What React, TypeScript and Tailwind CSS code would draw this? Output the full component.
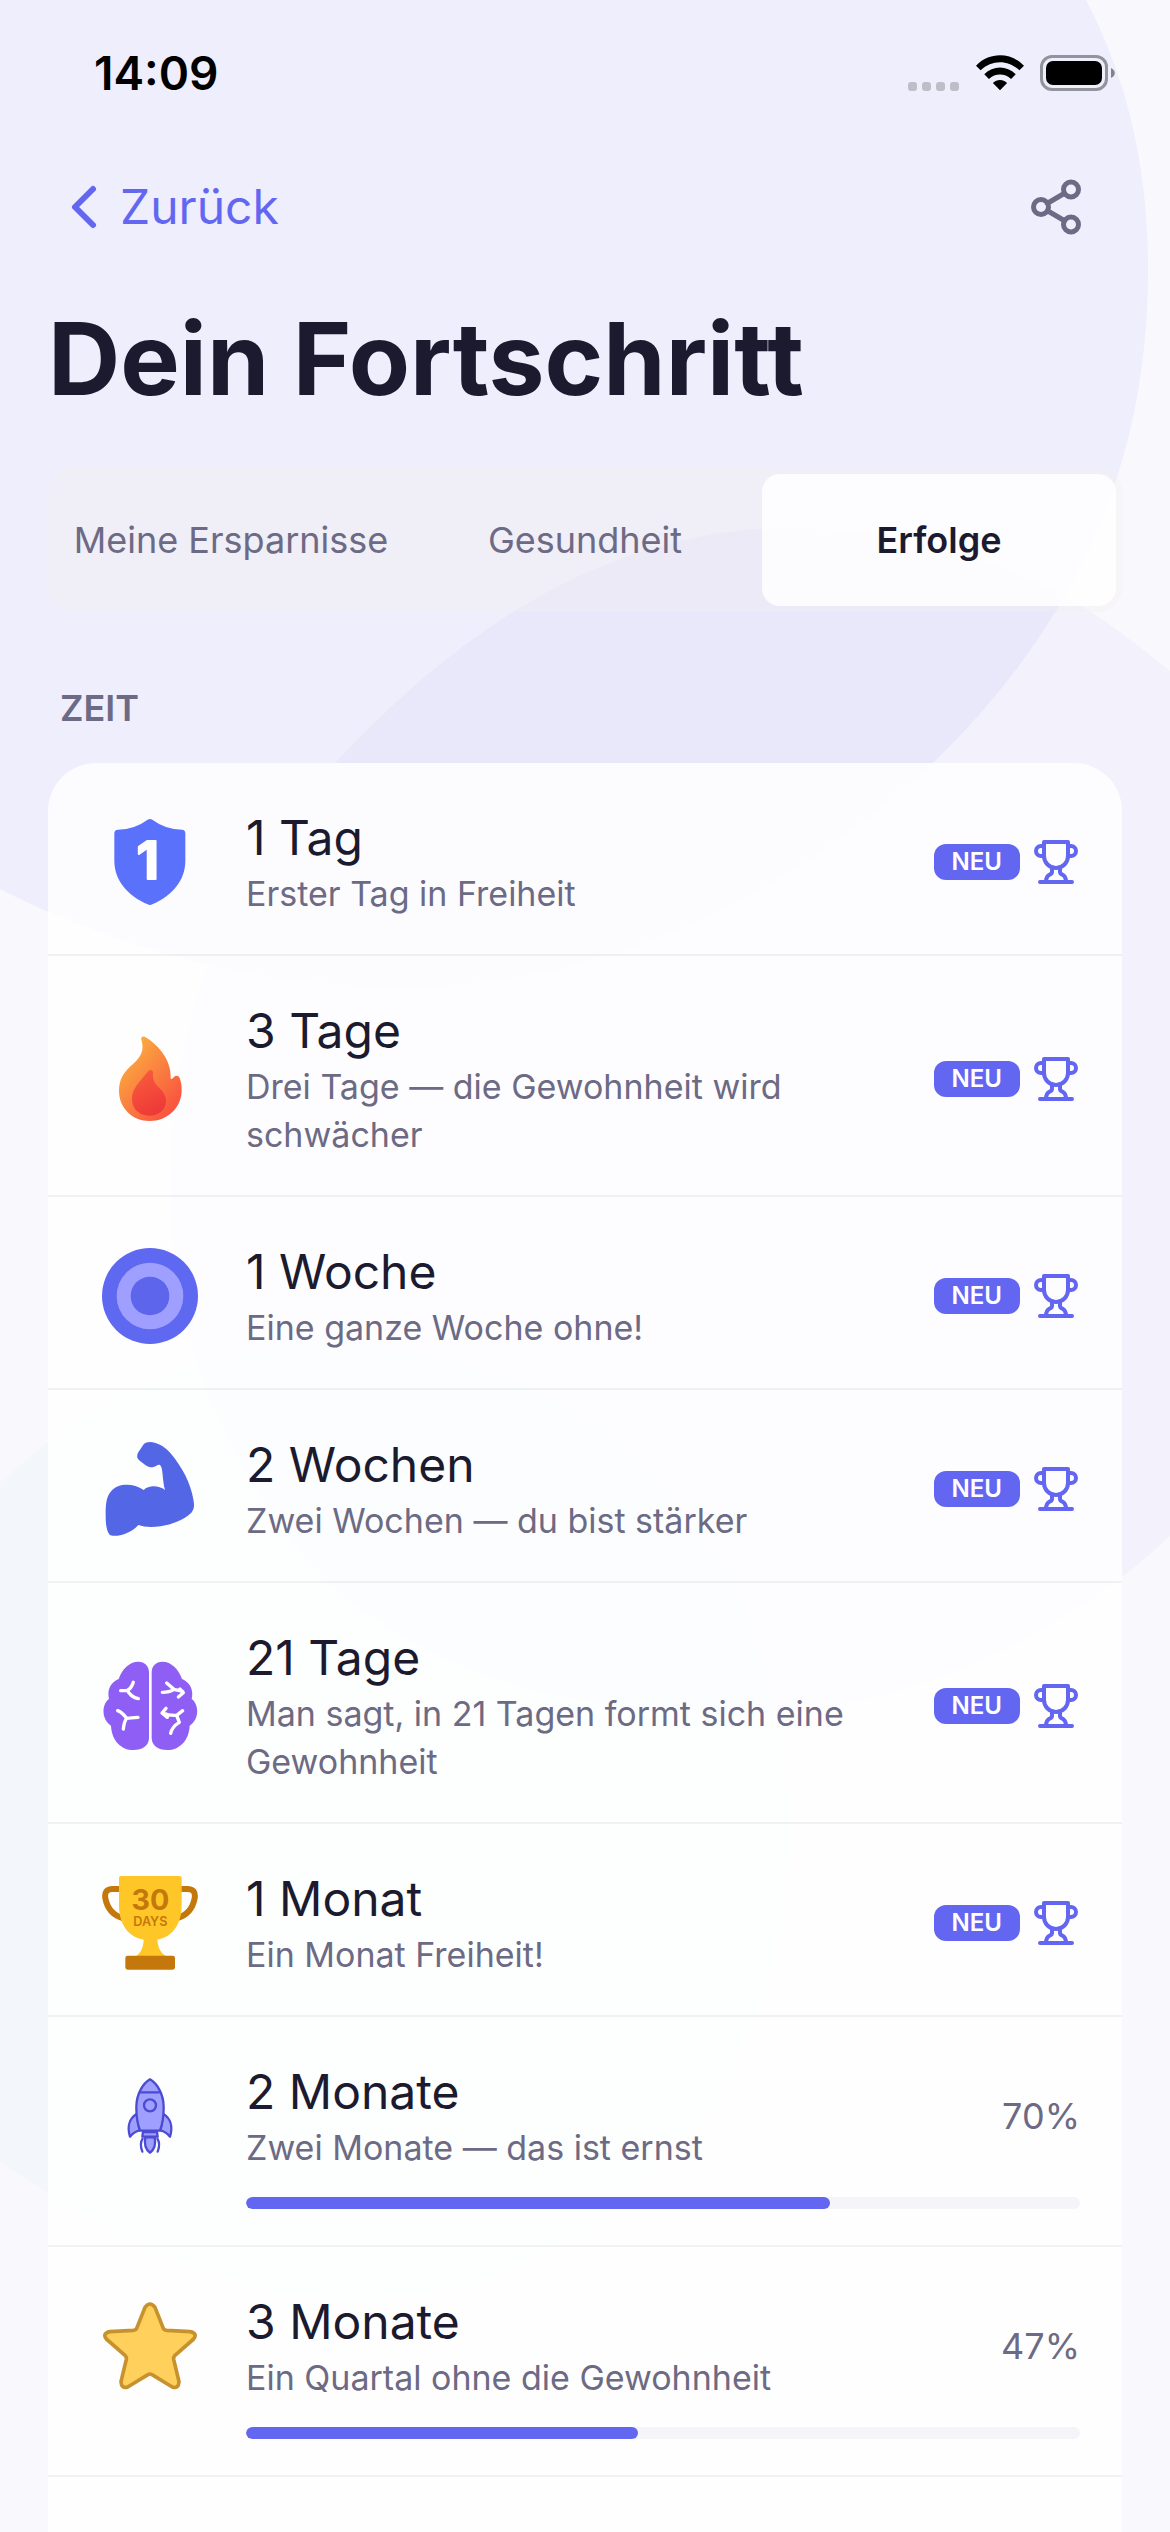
import type { ReactNode } from "react";
import { ChevronLeft, Share2 } from "lucide-react";

type Achievement = {
  title: string;
  description: string;
  icon: ReactNode;
  progress?: number;
};

const tabs = ["Meine Ersparnisse", "Gesundheit", "Erfolge"];

function ShieldIcon() {
  return (
    <svg viewBox="0 0 288 288" className="size-24" aria-hidden="true">
      <path
        d="M137 17Q144 13 151 17Q190 46 240 47Q250 48 250 58V140C250 200 210 245 151 271Q144 275 137 271C78 245 37 200 37 140V58Q37 48 48 47Q98 46 137 17Z"
        fill="#5a71fb"
      />
      <text
        x="137"
        y="196"
        textAnchor="middle"
        fontFamily="Inter, sans-serif"
        fontSize="156"
        fontWeight="700"
        fill="#fff"
        stroke="#fff"
        strokeWidth="6"
        strokeLinejoin="round"
      >
        1
      </text>
    </svg>
  );
}

function FlameIcon() {
  return (
    <svg viewBox="0 0 288 288" className="size-24" aria-hidden="true">
      <defs>
        <linearGradient id="flame-outer" x1="0.2" y1="0.2" x2="0.8" y2="0.9">
          <stop offset="0" stopColor="#fba63f" />
          <stop offset="1" stopColor="#f9553f" />
        </linearGradient>
        <linearGradient id="flame-inner" x1="0.3" y1="0" x2="0.7" y2="0.9">
          <stop offset="0" stopColor="#f95c3c" />
          <stop offset="1" stopColor="#ee3a39" />
        </linearGradient>
      </defs>
      <path
        d="M118 26C116 15 126 14 133 20C172 44 206 88 206 134Q204 152 216 138C222 132 230 134 233 141C237 152 239 162 239 177C239 230 197 270 143 270C90 270 51 230 51 180C51 145 65 125 84 107C110 84 130 65 118 26Z"
        fill="url(#flame-outer)"
      />
      <path
        d="M137 122C143 114 152 116 153 124C152 142 155 155 168 167C184 182 192 193 192 210C192 237 170 254 141 254C112 254 90 234 90 204C90 184 99 169 112 153Z"
        fill="url(#flame-inner)"
      />
    </svg>
  );
}

function TargetIcon() {
  return (
    <svg viewBox="0 0 288 288" className="size-24" aria-hidden="true">
      <circle cx="144" cy="144" r="144" fill="#5f68f0" />
      <circle cx="144" cy="144" r="100" fill="#9f9fff" />
      <circle cx="144" cy="144" r="58" fill="#5d65ec" />
    </svg>
  );
}

function ArmIcon() {
  return (
    <svg viewBox="0 0 288 288" className="size-24" aria-hidden="true">
      <path
        d="M144 3C134 3 128 6 124 11L110 32C104 40 104 50 110 56C124 68 138 80 151 79C161 78 168 68 174 72C184 80 180 114 189 147C170 133 140 132 125 147C95 127 50 125 28 150C12 168 11 190 11 224C11 250 14 270 22 280C30 290 80 285 109 252C150 267 230 252 268 215C278 204 277 190 274 175C266 125 240 78 207 38C190 18 165 3 144 3Z"
        fill="#5366e6"
      />
    </svg>
  );
}

function BrainIcon() {
  const half =
    "M141 43C141 24 128 11 109 11C82 11 60 34 50 63C28 72 14 94 21 123C-2 140 -2 185 27 203C29 248 58 276 94 276C122 276 141 262 141 240Z";
  return (
    <svg viewBox="0 0 288 288" className="size-24" aria-hidden="true">
      <path d={half} fill="#8f5ff5" />
      <path d={half} fill="#8f5ff5" transform="translate(290 0) scale(-1 1)" />
      <g fill="none" stroke="#fff" strokeWidth="10" strokeLinecap="round" strokeLinejoin="round">
        <path d="M94 73Q88 92 76 97L56 98M76 97Q86 118 109 122" />
        <path d="M47 158Q62 164 74 181Q88 180 108 178M74 181Q66 192 64 213" />
        <path d="M194 75L216 94Q202 103 181 103M216 94L242 100M234 93L244 104L229 117" />
        <path d="M192 151L180 165L196 178M182 165Q206 174 224 172L242 158M224 172L232 193Q210 206 206 226" />
      </g>
    </svg>
  );
}

function CupIcon() {
  return (
    <svg viewBox="0 0 288 288" className="size-24" aria-hidden="true">
      <g fill="none" stroke="#c4780c" strokeWidth="18">
        <path d="M56 42H32C14 42 7 52 10 70C16 102 34 122 64 130" />
        <path d="M232 42H256C274 42 281 52 278 70C272 102 254 122 224 130" />
      </g>
      <path
        d="M57 3H233Q239 3 239 9V90C239 150 210 186 166 194C168 218 176 234 193 244H102C116 234 124 218 125 194C80 186 51 150 51 90V9Q51 3 57 3Z"
        fill="#ffc627"
      />
      <rect x="70" y="242" width="149" height="42" rx="7" fill="#c4780c" />
      <text fill="#c4780c" fontFamily="Inter, sans-serif" textAnchor="middle">
        <tspan x="145" y="104" fontSize="86" fontWeight="700">
          30
        </tspan>
        <tspan x="145" y="152" fontSize="38" fontWeight="600">
          DAYS
        </tspan>
      </text>
    </svg>
  );
}

function RocketIcon() {
  return (
    <svg viewBox="0 0 288 288" className="size-24" aria-hidden="true">
      <g fill="#9f9fff" stroke="#4b4bd3" strokeWidth="7" strokeLinecap="round" strokeLinejoin="round">
        <path d="M104 138C84 150 74 174 84 206C92 196 100 190 113 187Z" />
        <path d="M184 138C204 150 214 174 204 206C196 196 188 190 175 187Z" />
        <path d="M144 34C124 46 103 76 103 118C103 148 107 170 114 188H174C181 170 185 148 185 118C185 76 164 46 144 34Z" />
        <path d="M117 73H171" />
        <circle cx="144" cy="112" r="18" />
        <path d="M122 212C114 224 116 238 121 251M166 212C174 224 172 238 167 251" fill="none" />
        <path d="M130 208C126 230 132 246 144 254C156 246 162 230 158 208Z" />
        <path d="M123 192L121 206H167L165 192Z" />
      </g>
    </svg>
  );
}

function StarIcon() {
  return (
    <svg viewBox="0 0 288 288" className="size-24" aria-hidden="true">
      <path
        d="M104 91L129 28Q144 8 159 28L184 91Q186 96 194 97L264 101Q288 106 275 123L219 172Q214 177 215 184L231 251Q230 273 211 267L150 230Q144 226 138 230L77 267Q58 273 57 251L73 184Q74 177 69 172L13 123Q0 106 24 101L94 97Q102 96 104 91Z"
        fill="#ffd15c"
        stroke="#c7922e"
        strokeWidth="11"
        strokeLinejoin="round"
      />
    </svg>
  );
}

function TrophyIcon() {
  return (
    <svg
      viewBox="0 0 24 24"
      className="size-12 text-[#6366f1]"
      fill="none"
      stroke="currentColor"
      strokeWidth="2"
      strokeLinecap="round"
      strokeLinejoin="round"
      aria-hidden="true"
    >
      <path d="M6 9H4.5a2.5 2.5 0 0 1 0-5H6" />
      <path d="M18 9h1.5a2.5 2.5 0 0 0 0-5H18" />
      <path d="M4 22h16" />
      <path d="M10 14.66V17c0 .55-.47.98-.97 1.21C7.85 18.75 7 20.24 7 22" />
      <path d="M14 14.66V17c0 .55.47.98.97 1.21C16.15 18.75 17 20.24 17 22" />
      <path d="M18 2H6v7a6 6 0 0 0 12 0V2Z" />
    </svg>
  );
}

const achievements: Achievement[] = [
  { title: "1 Tag", description: "Erster Tag in Freiheit", icon: <ShieldIcon /> },
  { title: "3 Tage", description: "Drei Tage — die Gewohnheit wird schwächer", icon: <FlameIcon /> },
  { title: "1 Woche", description: "Eine ganze Woche ohne!", icon: <TargetIcon /> },
  { title: "2 Wochen", description: "Zwei Wochen — du bist stärker", icon: <ArmIcon /> },
  { title: "21 Tage", description: "Man sagt, in 21 Tagen formt sich eine Gewohnheit", icon: <BrainIcon /> },
  { title: "1 Monat", description: "Ein Monat Freiheit!", icon: <CupIcon /> },
  { title: "2 Monate", description: "Zwei Monate — das ist ernst", icon: <RocketIcon />, progress: 70 },
  { title: "3 Monate", description: "Ein Quartal ohne die Gewohnheit", icon: <StarIcon />, progress: 47 },
];

// Soft overlapping shapes behind the whole page
function Backdrop() {
  return (
    <svg
      viewBox="0 0 1170 2532"
      preserveAspectRatio="xMidYMin slice"
      className="absolute inset-0 -z-10 size-full"
      aria-hidden="true"
    >
      <path
        d="M0 1482C16 1469 32 1454 48 1442C130 1380 220 1345 330 1345C600 1345 790 1560 790 1830C790 2090 600 2300 350 2300C220 2300 110 2235 0 2162Z"
        fill="#f3f7fb"
      />
      <path
        d="M1086 0C1128 80 1148 170 1148 270C1148 460 1080 620 934 762C800 885 620 987 400 987C240 987 100 940 0 889V0Z"
        fill="#6366f1"
        fillOpacity="0.065"
      />
      <path
        d="M170 1190C170 1010 230 880 336 762C450 640 600 528 790 528C900 528 1000 558 1080 605C1112 625 1142 648 1170 671V1536C1060 1640 900 1714 740 1714C560 1714 430 1670 333 1587C230 1480 170 1340 170 1190Z"
        fill="#7a62ee"
        fillOpacity="0.038"
      />
    </svg>
  );
}

function StatusBar() {
  return (
    <div className="flex h-[141px] items-center justify-between pt-1 pr-[54px] pl-[94px]">
      <span className="text-[46px] leading-none font-semibold text-black">14:09</span>
      <div className="flex items-center gap-4">
        <svg viewBox="0 0 52 38" className="h-[38px] w-[52px]" fill="#000" fillOpacity="0.2" aria-hidden="true">
          <rect x="0" y="28" width="9" height="9" rx="3" />
          <rect x="14" y="28" width="9" height="9" rx="3" />
          <rect x="28" y="28" width="9" height="9" rx="3" />
          <rect x="42" y="28" width="9" height="9" rx="3" />
        </svg>
        <svg viewBox="0 0 145 114" className="h-[38px] w-[48px]" aria-hidden="true">
          <path d="M0 35C40 -7 105 -7 145 35L131 49C98 16 47 16 14 49Z" />
          <path d="M25 61C52 34 93 34 120 61L106 75C87 57 58 57 39 75Z" />
          <path d="M51 87C63 75 82 75 94 87L72.500 109Z" />
        </svg>
        <svg viewBox="0 0 76 36" className="h-[36px] w-[76px]" aria-hidden="true">
          <rect x="1.500" y="1.500" width="65" height="33" rx="10.500" fill="none" stroke="#000" strokeOpacity="0.38" strokeWidth="3" />
          <rect x="6" y="6" width="56" height="24" rx="7" />
          <path d="M71 13C76 15 76 21 71 23Z" fillOpacity="0.45" />
        </svg>
      </div>
    </div>
  );
}

function AchievementRow({ title, description, icon, progress }: Achievement) {
  return (
    <li className="flex flex-col gap-[25px] border-b-2 border-black/5 pt-[42px] pr-[42px] pb-9 pl-[54px]">
      <div className="flex items-center gap-12">
        <div className="size-24 shrink-0">{icon}</div>
        <div className="min-w-0 flex-1">
          <h3 className="text-[48px] leading-[65px] text-[#1b1a2e]">{title}</h3>
          <p className="text-[34px] leading-[48px] text-[#6c6a84]">{description}</p>
        </div>
        {progress === undefined ? (
          <div className="flex shrink-0 items-center gap-3">
            <span className="rounded-xl bg-[#6366f1] px-[18px] text-[24px] leading-[36px] font-semibold text-white">
              NEU
            </span>
            <TrophyIcon />
          </div>
        ) : (
          <span className="shrink-0 text-[36px] leading-[48px] text-[#6c6a84]">{progress}%</span>
        )}
      </div>
      {progress !== undefined && (
        <div
          role="progressbar"
          aria-label={title}
          aria-valuenow={progress}
          aria-valuemin={0}
          aria-valuemax={100}
          className="ml-36 h-3 overflow-hidden rounded-full bg-[#f5f4f9]"
        >
          <div className="h-full rounded-full bg-[#6366f1]" style={{ width: `${progress}%` }} />
        </div>
      )}
    </li>
  );
}

export default function App() {
  const activeTab = "Erfolge";

  return (
    <div className="relative isolate flex min-h-screen flex-col overflow-hidden bg-[#f8f8fd] font-['Inter',sans-serif]">
      <Backdrop />
      <StatusBar />

      <header className="px-12">
        <div className="flex h-[132px] items-center justify-between pr-9">
          <button type="button" className="flex items-center text-[48px] leading-[60px] text-[#6366f1]">
            <ChevronLeft className="size-[72px]" strokeWidth={2} />
            Zurück
          </button>
          <button type="button" aria-label="Teilen" className="text-[#6c6a84]">
            <Share2 className="size-[60px]" strokeWidth={2} />
          </button>
        </div>
        <h1 className="pt-[26px] text-[100px] leading-[120px] font-bold text-[#1b1a2e]">Dein Fortschritt</h1>
      </header>

      <main className="flex flex-1 flex-col px-12 pt-[49px]">
        <div role="tablist" className="flex rounded-3xl bg-[#f4f0ec]/30 p-[6px]">
          {tabs.map((tab) => (
            <button
              key={tab}
              type="button"
              role="tab"
              aria-selected={tab === activeTab}
              className={
                tab === activeTab
                  ? "h-[132px] flex-1 basis-0 rounded-[18px] bg-white/85 text-[36px] font-semibold text-[#1b1a2e]"
                  : "h-[132px] flex-1 basis-0 rounded-[18px] text-[36px] text-[#6c6a84]"
              }
            >
              {tab}
            </button>
          ))}
        </div>

        <h2 className="px-3 pt-[72px] pb-[31px] text-[36px] leading-[48px] font-semibold text-[#6c6a84]">ZEIT</h2>
        <ul className="flex-1 rounded-t-[48px] bg-white/85">
          {achievements.map((item) => (
            <AchievementRow key={item.title} {...item} />
          ))}
        </ul>
      </main>
    </div>
  );
}
